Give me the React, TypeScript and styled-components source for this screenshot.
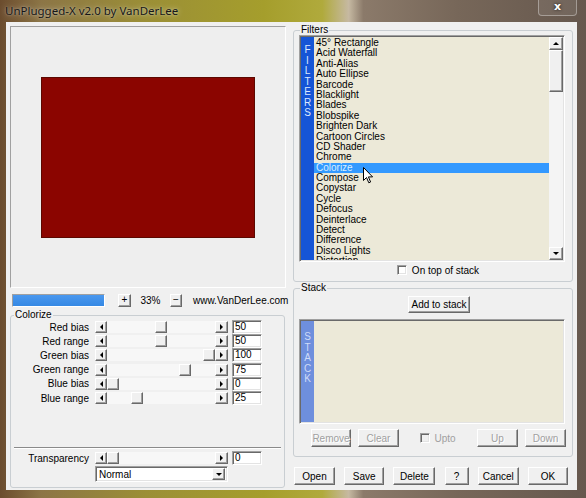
import React from 'react';
import styled, { createGlobalStyle } from 'styled-components';

const GlobalStyle = createGlobalStyle`
  html, body { margin: 0; padding: 0; }
  body {
    width: 586px;
    height: 498px;
    overflow: hidden;
    font-family: "Liberation Sans Narrow", "Liberation Sans", Arial, sans-serif;
    font-size: 10px;
    color: #000;
  }
`;

const filters = [
  '45° Rectangle', 'Acid Waterfall', 'Anti-Alias', 'Auto Ellipse', 'Barcode', 'Blacklight',
  'Blades', 'Blobspike', 'Brighten Dark', 'Cartoon Circles', 'CD Shader', 'Chrome', 'Colorize',
  'Compose', 'Copystar', 'Cycle', 'Defocus', 'Deinterlace', 'Detect', 'Difference',
  'Disco Lights', 'Distortion',
];

const sliders = [
  { label: 'Red bias', value: 50 },
  { label: 'Red range', value: 50 },
  { label: 'Green bias', value: 100 },
  { label: 'Green range', value: 75 },
  { label: 'Blue bias', value: 0 },
  { label: 'Blue range', value: 25 },
];

const Frame = styled.div`
  width: 586px;
  height: 498px;
  display: flex;
  flex-direction: column;
  background: linear-gradient(90deg, #6b4c2e 0%, #8c7546 7%, #9b8f36 25%, #a59e2c 45%, #b0aa3c 55%,
    #c6b9a2 59.5%, #8b7a6a 62%, #776759 78%, #66584e 100%);
`;

const TitleBar = styled.div`
  height: 22px;
  flex: none;
  display: flex;
  justify-content: space-between;
  padding: 0 9px 0 5px;
`;

const TitleText = styled.div`
  font-family: "Noto Sans", "Open Sans", sans-serif;
  font-size: 11.5px;
  line-height: 21px;
  color: #161616;
  text-shadow: 0 0 6px rgba(255, 255, 255, 0.55), 0 0 2px rgba(255, 255, 255, 0.45);
`;

const CloseButton = styled.div`
  width: 39px;
  height: 16px;
  box-sizing: border-box;
  border: 1px solid rgba(255, 255, 255, 0.35);
  border-top: none;
  border-radius: 0 0 4px 4px;
  background: rgba(255, 255, 255, 0.08);
  color: #fff;
  font-family: "DejaVu Sans", sans-serif;
  font-weight: bold;
  font-size: 11px;
  line-height: 14px;
  text-align: center;
  text-shadow: 0 0 3px rgba(0, 0, 0, 0.8);
`;

const Client = styled.div`
  margin: 0 9px 0 6px;
  height: 468px;
  background: #f0f0f0;
  display: grid;
  grid-template-columns: 284px 1fr;
`;

const LeftColumn = styled.div`
  display: flex;
  flex-direction: column;
  padding: 4px 0 0 4px;
`;

const RightColumn = styled.div`
  display: flex;
  flex-direction: column;
  padding: 3px 0 0 3px;
`;

const Preview = styled.div`
  width: 276px;
  height: 262px;
  box-sizing: border-box;
  border: 1px solid;
  border-color: #a0a0a0 #fff #fff #a0a0a0;
  background: #eeeeee;
  display: flex;
  align-items: center;
  justify-content: center;
`;

const Swatch = styled.div`
  width: 214px;
  height: 161px;
  box-sizing: border-box;
  background: #8b0500;
  border: 1px solid #5c0800;
`;

const ZoomRow = styled.div`
  display: flex;
  align-items: center;
  height: 14px;
  margin: 5px 0 0 2px;
`;

const ZoomBar = styled.div`
  width: 93px;
  height: 13px;
  box-sizing: border-box;
  border: 1px solid;
  border-color: #a0a0a0 #fff #fff #a0a0a0;
  background: linear-gradient(#4a98ee, #3588e4);
  margin-right: 13px;
`;

const ZoomValue = styled.div`
  width: 39px;
  text-align: center;
`;

const SiteLink = styled.div`
  margin-left: 11px;
`;

const raised = `
  background: #f0f0f0;
  border: 1px solid;
  border-color: #fff #696969 #696969 #fff;
  box-shadow: inset -1px -1px 0 #a0a0a0;
  box-sizing: border-box;
`;

const sunken = `
  border: 1px solid;
  border-color: #a0a0a0 #fff #fff #a0a0a0;
  box-shadow: inset 1px 1px 0 #696969, inset -1px -1px 0 #e3e3e3;
  box-sizing: border-box;
`;

const SmallButton = styled.div<{ $w: number }>`
  ${raised}
  width: ${(p) => p.$w}px;
  height: 13px;
  font-size: 10px;
  line-height: 10px;
  text-align: center;
`;

const ArrowBtn = styled.div<{ $dir: 'left' | 'right' | 'up' | 'down'; $w?: number; $h?: number }>`
  ${raised}
  flex: none;
  width: ${(p) => p.$w ?? 12}px;
  height: ${(p) => p.$h ?? 12}px;
  display: flex;
  align-items: center;
  justify-content: center;
  &::after {
    content: '';
    width: 0;
    height: 0;
    border-style: solid;
    border-color: transparent;
    ${(p) =>
      p.$dir === 'left'
        ? 'border-width: 3px 3px 3px 0; border-right-color: #000;'
        : p.$dir === 'right'
        ? 'border-width: 3px 0 3px 3px; border-left-color: #000;'
        : p.$dir === 'up'
        ? 'border-width: 0 3px 3px 3px; border-bottom-color: #000;'
        : 'border-width: 3px 3px 0 3px; border-top-color: #000;'}
  }
`;

const Group = styled.fieldset<{ $h: number; $w: number }>`
  margin: 0;
  padding: 0;
  min-width: 0;
  box-sizing: border-box;
  width: ${(p) => p.$w}px;
  height: ${(p) => p.$h}px;
  border: 1px solid #c9ced2;
  border-radius: 3px;
  display: flex;
  flex-direction: column;
`;

const Legend = styled.legend<{ $offset: number }>`
  padding: 0 1px;
  margin-left: ${(p) => p.$offset}px;
  font-size: 10px;
  line-height: 10px;
`;

const ColorizeGroup = styled(Group)`
  margin: 3px 0 0 0;
`;

const SliderRow = styled.div<{ $top?: number; $h?: number }>`
  display: flex;
  align-items: center;
  height: ${(p) => p.$h ?? 14.2}px;
  margin-top: ${(p) => p.$top ?? 0}px;
  flex: none;
`;

const SliderLabel = styled.div`
  width: 78px;
  margin-right: 6px;
  text-align: right;
  white-space: nowrap;
`;

const Track = styled.div`
  width: 108px;
  height: 12px;
  background: #f7f7f7;
  display: flex;
  align-items: center;
`;

const Thumb = styled.div`
  ${raised}
  width: 12px;
  height: 12px;
`;

const ValueBox = styled.div`
  ${sunken}
  width: 30px;
  height: 14px;
  margin-left: 4px;
  background: #fff;
  padding-left: 2px;
  line-height: 12px;
`;

const Spacer = styled.div`
  flex: 1;
`;

const Separator = styled.div`
  margin: 42px 3px 0;
  border-top: 1px solid #8a8a8a;
  border-bottom: 1px solid #fff;
`;

const SelectRow = styled.div`
  display: flex;
  margin: 1px 0 0 84px;
`;

const Select = styled.div`
  ${sunken}
  width: 133px;
  height: 16px;
  background: #fff;
  display: flex;
  align-items: center;
  justify-content: space-between;
  padding: 0 2px 0 3px;
`;

const ListBox = styled.div<{ $h: number }>`
  ${sunken}
  width: 266px;
  height: ${(p) => p.$h}px;
  margin-left: 5px;
  flex: none;
  background: #ece9d8;
  display: grid;
  grid-template-columns: 13px 1fr auto;
  padding: 1px;
`;

const Band = styled.div<{ $color: string; $text: string; $top: number }>`
  background: ${(p) => p.$color};
  color: ${(p) => p.$text};
  display: flex;
  flex-direction: column;
  align-items: center;
  padding-top: ${(p) => p.$top}px;
  font-size: 10px;
  line-height: 10.5px;
`;

const Items = styled.div`
  position: relative;
  overflow: hidden;
  padding-top: 1px;
`;

const Item = styled.div<{ $selected?: boolean }>`
  height: 10.4px;
  line-height: 10.4px;
  padding-left: 2px;
  white-space: nowrap;
  background: ${(p) => (p.$selected ? '#3399ff' : 'transparent')};
  color: ${(p) => (p.$selected ? '#d9eeff' : '#000')};
`;

const Cursor = styled.svg`
  position: absolute;
  left: 49px;
  top: 130px;
`;

const ScrollBar = styled.div`
  width: 14px;
  display: flex;
  flex-direction: column;
  background: #f4f4f4;
`;

const ScrollThumb = styled.div`
  ${raised}
  height: 42px;
`;

const CheckRow = styled.div<{ $disabled?: boolean }>`
  height: 16px;
  display: flex;
  align-items: center;
  justify-content: center;
  padding-left: 10px;
  gap: 5px;
  color: ${(p) => (p.$disabled ? '#a0a0a0' : '#000')};
`;

const UptoCheck = styled(CheckRow)`
  height: 18px;
  padding-left: 0;
  gap: 4px;
`;

const CheckBox = styled.div<{ $disabled?: boolean }>`
  ${sunken}
  width: 10px;
  height: 10px;
  background: ${(p) => (p.$disabled ? '#f0f0f0' : '#fff')};
`;

const Button = styled.button<{ $w: number; $h?: number }>`
  ${raised}
  width: ${(p) => p.$w}px;
  height: ${(p) => p.$h ?? 18}px;
  padding: 0;
  font: inherit;
  font-size: 10px;
  color: #000;
  &:disabled {
    color: #a0a0a0;
    text-shadow: 1px 1px 0 #fff;
  }
`;

const StackGroup = styled(Group)`
  margin-top: 1px;
`;

const AddRow = styled.div`
  display: flex;
  justify-content: center;
  margin: 3px 0 6px 12px;
`;

const StackButtons = styled.div`
  display: grid;
  grid-template-columns: 40px 41px 1fr 41px 41px;
  column-gap: 7px;
  margin: 5px 6px 0 17px;
`;

const BottomButtons = styled.div`
  display: flex;
  justify-content: space-between;
  width: 274px;
  margin: 10px 0 0 1px;
`;

const Slider = ({ label, value }: { label: string; value: number }) => (
  <SliderRow>
    <SliderLabel>{label}</SliderLabel>
    <ArrowBtn $dir="left" />
    <Track>
      <Thumb style={{ marginLeft: (value / 100) * 96 }} />
    </Track>
    <ArrowBtn $dir="right" $w={13} />
    <ValueBox>{value}</ValueBox>
  </SliderRow>
);

export default function App() {
  return (
    <>
      <GlobalStyle />
      <Frame>
        <TitleBar>
          <TitleText>UnPlugged-X v2.0 by VanDerLee</TitleText>
          <CloseButton>x</CloseButton>
        </TitleBar>
        <Client>
          <LeftColumn>
            <Preview>
              <Swatch />
            </Preview>
            <ZoomRow>
              <ZoomBar />
              <SmallButton $w={13}>+</SmallButton>
              <ZoomValue>33%</ZoomValue>
              <SmallButton $w={12}>−</SmallButton>
              <SiteLink>www.VanDerLee.com</SiteLink>
            </ZoomRow>
            <ColorizeGroup $w={275} $h={178}>
              <Legend $offset={3}>Colorize</Legend>
              {sliders.map((s) => (
                <Slider key={s.label} label={s.label} value={s.value} />
              ))}
              <Separator />
              <SliderRow $top={2} $h={14}>
                <SliderLabel>Transparency</SliderLabel>
                <ArrowBtn $dir="left" />
                <Track>
                  <Thumb />
                </Track>
                <ArrowBtn $dir="right" $w={13} />
                <ValueBox>0</ValueBox>
              </SliderRow>
              <SelectRow>
                <Select>
                  <span>Normal</span>
                  <ArrowBtn $dir="down" $w={13} />
                </Select>
              </SelectRow>
            </ColorizeGroup>
          </LeftColumn>

          <RightColumn>
            <Group $w={280} $h={257}>
              <Legend $offset={6}>Filters</Legend>
              <ListBox $h={227}>
                <Band $color="#1555d6" $text="#dbe8ff" $top={8}>
                  {'FILTERS'.split('').map((c, i) => (
                    <span key={i}>{c}</span>
                  ))}
                </Band>
                <Items>
                  {filters.map((f) => (
                    <Item key={f} $selected={f === 'Colorize'}>
                      {f}
                    </Item>
                  ))}
                  <Cursor width="11" height="17" viewBox="0 0 11 17">
                    <path
                      d="M0.5 0.5 L0.5 13.5 L3.5 10.5 L5.8 15.8 L7.6 15 L5.4 9.9 L9.6 9.9 Z"
                      fill="#fff"
                      stroke="#000"
                      strokeWidth="1"
                      strokeLinejoin="round"
                    />
                  </Cursor>
                </Items>
                <ScrollBar>
                  <ArrowBtn $dir="up" $w={14} $h={13} />
                  <ScrollThumb />
                  <Spacer />
                  <ArrowBtn $dir="down" $w={14} $h={13} />
                </ScrollBar>
              </ListBox>
              <CheckRow>
                <CheckBox />
                <span>On top of stack</span>
              </CheckRow>
            </Group>

            <StackGroup $w={280} $h={174}>
              <Legend $offset={6}>Stack</Legend>
              <AddRow>
                <Button $w={62} $h={17}>Add to stack</Button>
              </AddRow>
              <ListBox $h={105}>
                <Band $color="#6e8fdd" $text="#cfdbf8" $top={11}>
                  {'STACK'.split('').map((c, i) => (
                    <span key={i}>{c}</span>
                  ))}
                </Band>
                <Items />
                <span />
              </ListBox>
              <StackButtons>
                <Button $w={40} disabled>Remove</Button>
                <Button $w={41} disabled>Clear</Button>
                <UptoCheck $disabled>
                  <CheckBox $disabled />
                  <span>Upto</span>
                </UptoCheck>
                <Button $w={41} disabled>Up</Button>
                <Button $w={41} disabled>Down</Button>
              </StackButtons>
            </StackGroup>

            <BottomButtons>
              <Button $w={41}>Open</Button>
              <Button $w={40}>Save</Button>
              <Button $w={42}>Delete</Button>
              <Button $w={24}>?</Button>
              <Button $w={41}>Cancel</Button>
              <Button $w={40}>OK</Button>
            </BottomButtons>
          </RightColumn>
        </Client>
      </Frame>
    </>
  );
}
